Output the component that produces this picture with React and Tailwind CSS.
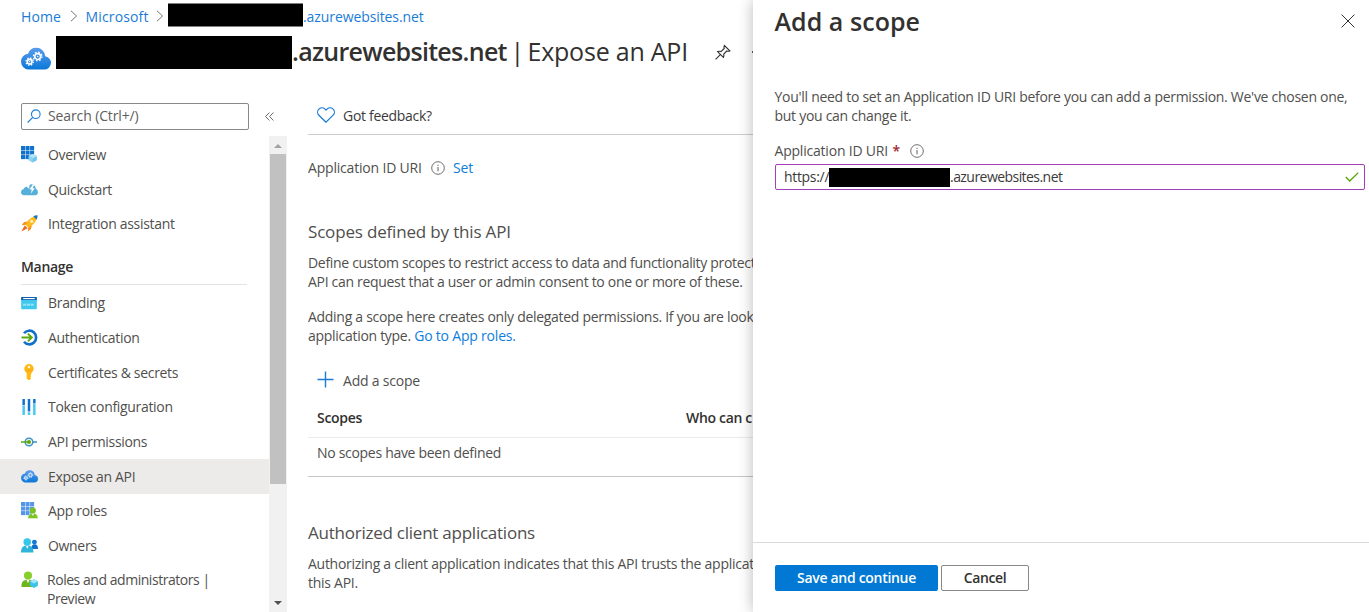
import React from 'react';

const CLOUD =
  'M18 11.32a4.12 4.12 0 0 0-3.51-4 5.15 5.15 0 0 0-5.25-5 5.25 5.25 0 0 0-5 3.49A4.86 4.86 0 0 0 0 10.59a4.94 4.94 0 0 0 5.07 4.78H13.82A4.1 4.1 0 0 0 18 11.32Z';

function Svg({ children, className = 'w-4 h-4' }) {
  return (
    <svg viewBox="0 0 18 18" fill="none" className={`shrink-0 ${className}`}>
      {children}
    </svg>
  );
}

function Gear({ cx, cy, r }) {
  const step = (2 * Math.PI * (r + 0.45)) / 16;
  return (
    <g stroke="#fff">
      <circle cx={cx} cy={cy} r={r - 0.35} strokeWidth="0.95" />
      <circle cx={cx} cy={cy} r={r + 0.45} strokeWidth="0.8" strokeDasharray={`${step} ${step}`} />
      <circle cx={cx} cy={cy} r="0.45" fill="#fff" stroke="none" />
    </g>
  );
}

function CloudGears({ className, id }) {
  return (
    <Svg className={className}>
      <defs>
        <linearGradient id={id} x1="0" y1="0" x2="0" y2="1">
          <stop offset="0" stopColor="#5a9bee" />
          <stop offset="1" stopColor="#0a78d8" />
        </linearGradient>
      </defs>
      <path d={CLOUD} fill={`url(#${id})`} />
      <Gear cx={10} cy={7.5} r={2.1} />
      <Gear cx={5.2} cy={10.6} r={1.75} />
    </Svg>
  );
}

function Grid({ color }) {
  return [0, 4.8, 9.6].map((y) =>
    [0, 4.8, 9.6].map((x) => <rect key={`${x}-${y}`} x={x} y={y} width="4.3" height="4.3" fill={color} />)
  );
}

const icons = {
  overview: (
    <Svg className="h-[17px] w-[17px] -mr-px">
      <Grid color="#0f73cc" />
      <path d="M12.5 8.4 16.8 10.6v4.6l-4.3 2.4-4.3-2.4v-4.6z" fill="#6fc4ec" />
      <path d="M12.5 8.4 16.8 10.6l-4.3 2.3-4.3-2.3z" fill="#b4e4f8" />
      <path d="M12.5 12.9v4.7l-4.3-2.4v-4.6z" fill="#8ed3f2" />
    </Svg>
  ),
  quickstart: (
    <Svg className="h-[17px] w-[17px] -mr-px">
      <path
        d="M17.9 11.6a3.6 3.6 0 0 0-2.2-3.3 4.600 4.600 0 0 0-4.600-4.800A4.600 4.600 0 0 0 7 6.200 3.800 3.800 0 0 0 2.800 8.400 3.300 3.300 0 0 0 0 11.700a3.300 3.300 0 0 0 3.200 3.300h11.500a3.300 3.300 0 0 0 3.200-3.400Z"
        fill="#56afd8"
      />
      <path d="M12.600 3.400 9 9h2.500l-1.200 4.400 4.300-5.800h-2.400l1.900-4zM7.300 3.200l-.6 3.600 2 1.400.4-4.800z" fill="#fff" />
    </Svg>
  ),
  integration: (
    <Svg className="h-[17px] w-[17px] -mr-px">
      <path d="M7.2 6.7 3.2 7.6 .6 10.8l4.6-.4zM11.4 10.8l-.8 4-3.4 2.8.6-4.8z" fill="#f78d1e" />
      <path d="M3.9 11 .4 17.5l6.7-3.4z" fill="#ef6a1b" />
      <path d="M16.8 1C12.4 1.3 8.2 3.7 4.5 10.1l3.3 3.5C14.2 10 16.9 5.5 16.8 1Z" fill="#ffb91b" />
      <path d="M17.5.3C15.9.2 14.4.6 13 1.3L16.500 5c.8-1.500 1.100-3.100 1-4.700Z" fill="#1175cc" />
      <circle cx="11.3" cy="6.7" r="1.7" fill="#fff1b8" />
    </Svg>
  ),
  branding: (
    <Svg>
      <rect x="0.2" y="2.2" width="17.6" height="13.8" rx=".5" fill="#3fc8ee" />
      <path d="M.2 2.7a.5.5 0 0 1 .5-.5h16.600a.5.5 0 0 1 .5.5v3H.2z" fill="#0f62ad" />
      <path d="M2.500 4h13" stroke="#fff" strokeWidth="1.300" />
      <path
        d="m2.500 9.800.8 2.200.8-2.200.8 2.200.8-2.200m1 0 .8 2.200.8-2.200.8 2.200.8-2.200m1 0 .8 2.200.8-2.200.8 2.200.8-2.200"
        stroke="#d5f5ff"
        strokeWidth=".6"
      />
    </Svg>
  ),
  auth: (
    <Svg className="h-[17px] w-[17px] -mr-px">
      <path d="M3.200 4.500A7.200 7.200 0 1 1 3.200 13.500" stroke="#0f6fc9" strokeWidth="2.800" />
      <path d="M.5 9h10.500M7.300 4.900 11.500 9l-4.200 4.100" stroke="#5ba80f" strokeWidth="2" />
    </Svg>
  ),
  key: (
    <Svg>
      <path
        d="M14.300 5.400A5.300 5.300 0 0 0 9 .1a5.300 5.300 0 0 0-5.300 5.300c0 2 1.100 3.700 2.700 4.600v6.200l1.900 1.700h1.300l2-1.900-1.200-1.200 1.200-1.200-1.100-1.100 1.100-1.100V10a5.300 5.300 0 0 0 2.700-4.600Z"
        fill="#fdb813"
      />
      <circle cx="9" cy="3.400" r="1.500" fill="#fff4cc" />
      <path d="M6.300 7.300h5.400" stroke="#ff9a1f" />
    </Svg>
  ),
  token: (
    <Svg>
      <path d="M3 0v7M9 0v14M15 0v5" stroke="#0f73cc" strokeWidth="2.800" />
      <path d="M3 7.500V18M9 15v3M15 5.500V18" stroke="#4cc9ee" strokeWidth="2.800" />
    </Svg>
  ),
  api: (
    <Svg>
      <circle cx="9" cy="9" r="4.300" stroke="#3d92c9" strokeWidth="1.700" />
      <path d="M13.500 9H18" stroke="#3d92c9" strokeWidth="1.700" />
      <path d="M0 9h8" stroke="#5ba80f" strokeWidth="1.700" />
      <circle cx="9" cy="9" r="2.300" fill="#5ba80f" />
    </Svg>
  ),
  expose: <CloudGears id="cloudSmall" className="h-[17px] w-[17px] -mr-px" />,
  roles: (
    <Svg className="h-[17px] w-[17px] -mr-px">
      <Grid color="#5596e8" />
      <path d="M7.300 17.600c0-3.300 1.400-5.600 5.300-5.600s5.300 2.300 5.300 5.600z" fill="#7cc325" stroke="#fff" strokeWidth=".5" />
      <path d="m11.400 12.200 1.200 2.600 1.200-2.600z" fill="#fff" />
      <circle cx="12.600" cy="9" r="3.200" fill="#79c022" />
    </Svg>
  ),
  owners: (
    <Svg className="h-[17px] w-[17px] -mr-px">
      <path d="M11 12.800c0-3 .8-5 3.400-5S18 9.800 18 12.800z" fill="#0f6fc9" />
      <circle cx="14.200" cy="5.400" r="2.600" fill="#0f78d4" />
      <path d="M0 16.400C0 11.400 1.800 9 6.600 9s6.600 2.400 6.600 7.400z" fill="#2fb4dc" />
      <path d="m5.200 9.200 1.400 3.400L8 9.200z" fill="#fff" />
      <circle cx="6.600" cy="5.300" r="4" fill="#32c8ec" />
    </Svg>
  ),
  admins: (
    <Svg className="h-[17px] w-[17px] -mr-px">
      <path d="M.4 16.900C.4 11.500 2 9.200 7.400 9.200s7 2.300 7 7.700z" fill="#6fb51f" />
      <path d="m5.900 9.400 1.500 3.600 1.500-3.600z" fill="#fff" />
      <circle cx="7.400" cy="4.700" r="4.300" fill="#86cf2c" />
      <path d="m13.700 8.700 4.200 2.200v4.600l-4.200 2.400-4.200-2.400v-4.600z" fill="#3cc3e8" />
      <path d="m13.700 8.700 4.200 2.200-4.200 2.300-4.200-2.300z" fill="#a3e6f8" />
    </Svg>
  ),
};

function NavItem({ icon, label, active }) {
  return (
    <div className={`flex h-[34.7px] items-center pl-[21px] ${active ? 'bg-[#edebe9]' : ''}`}>
      {icons[icon]}
      <span className="ml-[11px] whitespace-nowrap">{label}</span>
    </div>
  );
}

function Info() {
  return (
    <svg viewBox="0 0 14 14" fill="none" stroke="#605e5c" className="h-3.5 w-3.5 shrink-0">
      <circle cx="7" cy="7" r="6.300" strokeWidth=".9" />
      <path d="M7 6v4.300M7 3.700v1.200" strokeWidth="1" />
    </svg>
  );
}

function Chevron() {
  return (
    <svg viewBox="0 0 8 12" fill="none" stroke="#767472" className="h-3 w-2 shrink-0">
      <path d="m1 .8 5.500 5.200L1 11.200" />
    </svg>
  );
}

export default function App() {
  return (
    <div className="flex h-[612px] w-[1369px] overflow-hidden bg-white font-['Open_Sans',sans-serif] text-[14px] leading-[19px] tracking-[-0.32px] text-[#504f4d]">
      <div className="flex w-[753px] shrink-0 flex-col overflow-hidden">
        <nav className="flex h-8 shrink-0 items-center pl-[21px] tracking-[-0.09px] whitespace-nowrap text-[#1a7cd6]">
          <span className="w-[49px] tracking-[0.1px]">Home</span>
          <Chevron />
          <span className="ml-[7.5px] w-[70.5px] tracking-[0.15px]">Microsoft</span>
          <Chevron />
          <span className="ml-[4px] h-[23px] w-[135px] shrink-0 -translate-y-[1.5px] bg-black" />
          <span>.azurewebsites.net</span>
        </nav>

        <header className="flex h-10 shrink-0 items-center pl-[21px] whitespace-nowrap text-[#323130]">
          <CloudGears className="mt-[13px] h-[30px] w-[30px]" id="cloudLarge" />
          <span className="ml-[5px] h-[33px] w-[236px] shrink-0 bg-black" />
          <h1 className="flex shrink-0 -translate-y-px text-[25px] leading-8 tracking-[-0.22px]">
            <span className="w-[218.5px] font-semibold tracking-[-0.7px]">.azurewebsites.net</span>
            <span className="w-[17px]">|</span>
            <span className="w-[160.5px]">Expose an API</span>
          </h1>
          <svg viewBox="0 0 16 16" fill="none" stroke="#323130" strokeWidth="1.100" className="ml-[27px] h-4 w-4 shrink-0">
            <path d="M.6 15.400 5.300 10.700M2.600 7.600l5.800 5.800c.7-1.200.8-2.200.3-3.300l3.100-3.100c.9.400 1.800.4 3-.1L9.400 1.500c-.6 1.200-.6 2.100-.2 3L6 7.600c-1.100-.5-2.200-.6-3.400 0Z" />
          </svg>
          <span className="ml-[21px] h-[2px] w-px shrink-0 bg-[#605e5c]" />
        </header>

        <div className="flex min-h-0 flex-1">
          <aside className="flex w-[287px] shrink-0 flex-col">
            <div className="flex h-[64px] shrink-0 items-center pt-[24px] pl-[21px]">
              <div className="flex h-[27px] w-[228px] items-center rounded-[2px] border border-[#8a8886] pl-[5px]">
                <svg viewBox="0 0 14 14" fill="none" stroke="#1a7cd6" strokeWidth="1.100" className="h-3.5 w-3.5">
                  <circle cx="8.800" cy="5.200" r="4.300" />
                  <path d="M5.800 8.300.6 13.500" />
                </svg>
                <span className="ml-[7px] pb-[2px] tracking-[-0.12px] text-[#605e5c]">Search (Ctrl+/)</span>
              </div>
              <svg viewBox="0 0 9 9" fill="none" stroke="#605e5c" strokeWidth=".9" className="ml-[16px] h-[9px] w-[9px]">
                <path d="M4.400.5.6 4.500l3.800 4M8.400.5 4.600 4.500l3.800 4" />
              </svg>
            </div>
            <div className="flex min-h-0 flex-1">
              <div className="w-[269px] shrink-0 overflow-hidden pt-[1.2px]">
                <NavItem icon="overview" label="Overview" />
                <NavItem icon="quickstart" label="Quickstart" />
                <NavItem icon="integration" label="Integration assistant" />
                <div className="mr-[22px] ml-[21px] flex h-[44.2px] items-center border-b border-[#e5e3e1] pt-[8px] font-semibold text-[#323130]">
                  Manage
                </div>
                <NavItem icon="branding" label="Branding" />
                <NavItem icon="auth" label="Authentication" />
                <NavItem icon="key" label="Certificates & secrets" />
                <NavItem icon="token" label="Token configuration" />
                <NavItem icon="api" label="API permissions" />
                <NavItem icon="expose" label="Expose an API" active />
                <NavItem icon="roles" label="App roles" />
                <NavItem icon="owners" label="Owners" />
                <div className="flex pt-[7px] pl-[21px]">
                  <span className="pt-px">{icons.admins}</span>
                  <span className="ml-[10px] tracking-[-0.46px]">
                    Roles and administrators |<br />
                    Preview
                  </span>
                </div>
              </div>
              <div className="flex w-[18px] shrink-0 flex-col items-center bg-[#f1f1f1]">
                <svg viewBox="0 0 8 4" className="mt-[8px] h-1 w-2 shrink-0">
                  <path d="M0 4 4 0l4 4z" fill="#a3a3a3" />
                </svg>
                <span className="mt-[6px] h-[330px] w-4 shrink-0 bg-[#c1c1c1]" />
                <svg viewBox="0 0 8 4" className="mt-auto mb-[7px] h-1 w-2 shrink-0">
                  <path d="M0 0 4 4l4-4z" fill="#505050" />
                </svg>
              </div>
            </div>
          </aside>

          <main className="ml-[21px] flex min-w-0 flex-1 flex-col overflow-hidden whitespace-nowrap">
            <div className="flex h-[63px] shrink-0 items-center border-b border-[#cfcdcb] pt-[24px] pl-[9px] text-[#3b3a39]">
              <svg viewBox="0 0 18 16" fill="none" stroke="#1a7cd6" strokeWidth="1.200" className="h-4 w-[18px]">
                <path d="M9 15.200 1.900 8.200A4.300 4.300 0 0 1 8 2.100l1 1 1-1a4.300 4.300 0 0 1 6.100 6.100Z" />
              </svg>
              <span className="ml-[8px] tracking-[-0.3px]">Got feedback?</span>
            </div>
            <div className="mt-[23px] flex items-center tracking-[-0.19px]">
              <span className="w-[123px]">Application ID URI</span>
              <Info />
              <span className="ml-[8px] text-[#0f7ddb]">Set</span>
            </div>
            <h2 className="mt-[43px] text-[17px] leading-[24px] tracking-[-0.17px]">Scopes defined by this API</h2>
            <p className="mt-[9px] tracking-[-0.31px]">
              Define custom scopes to restrict access to data and functionality protect
              <br />
              API can request that a user or admin consent to one or more of these.
            </p>
            <p className="mt-[16px] tracking-[-0.29px]">
              Adding a scope here creates only delegated permissions. If you are look
              <br />
              application type. <span className="tracking-[-0.2px] text-[#0f7ddb]">Go to App roles.</span>
            </p>
            <div className="mt-[26px] flex items-center pl-[9px] tracking-[-0.21px]">
              <svg viewBox="0 0 17 17" stroke="#1a7cd6" className="h-[17px] w-[17px] -translate-y-px">
                <path d="M8.500.5v16M.5 8.500h16" strokeWidth="1.400" />
              </svg>
              <span className="ml-[9px]">Add a scope</span>
            </div>
            <div className="mt-[9px] flex h-[39px] shrink-0 items-center border-b border-[#edebe9] pb-px pl-[9px] font-semibold text-[#323130]">
              <span className="w-[369px] shrink-0">Scopes</span>
              <span>Who can c</span>
            </div>
            <div className="flex h-[39px] shrink-0 items-center border-b border-[#c8c6c4] pb-[9px] pl-[9px] tracking-[-0.3px]">
              No scopes have been defined
            </div>
            <h2 className="mt-[44px] text-[17px] leading-[24px] tracking-[-0.24px]">Authorized client applications</h2>
            <p className="mt-[9px] tracking-[-0.27px]">
              Authorizing a client application indicates that this API trusts the applicat
              <br />
              this API.
            </p>
          </main>
        </div>
      </div>

      <section className="z-10 flex w-[616px] shrink-0 flex-col bg-white shadow-[0_0_14px_rgba(0,0,0,0.28)]">
        <div className="flex h-[42px] items-center justify-between pr-[14px] pl-[21.5px] text-[#323130]">
          <h2 className="text-[25px] leading-8 font-semibold tracking-[0.05px]">Add a scope</h2>
          <svg viewBox="0 0 14 14" stroke="#323130" className="h-3.5 w-3.5">
            <path d="m.6.6 12.800 12.800M13.400.6.6 13.400" />
          </svg>
        </div>
        <div className="flex-1 pt-[45px] pl-[22px]">
          <p className="-ml-[0.5px] tracking-[-0.28px] whitespace-nowrap">
            You'll need to set an Application ID URI before you can add a permission. We've chosen one,
            <br />
            but you can change it.
          </p>
          <div className="mt-[16px] -ml-[0.5px] flex items-center tracking-[-0.21px]">
            <span className="w-[118px]">Application ID URI</span>
            <span className="w-[17px] font-semibold text-[#a4262c]">*</span>
            <Info />
          </div>
          <div className="mt-[4px] mr-[4px] flex h-[26px] items-center rounded-[2px] border border-[#a33fb5] pr-[5px] pl-[8px] text-[#3b3a39]">
            <span className="w-[45px] pb-[2px]">https://</span>
            <span className="h-[19px] w-[121px] bg-black" />
            <span className="pb-[2px] tracking-[-0.55px]">.azurewebsites.net</span>
            <svg viewBox="0 0 14 10" fill="none" stroke="#57a300" strokeWidth="1.300" className="ml-auto h-2.5 w-3.5">
              <path d="m.8 5 3.900 4L13.300.6" />
            </svg>
          </div>
        </div>
        <footer className="flex h-[70px] gap-[3px] border-t border-[#dcdad8] pt-[22px] pl-[22px] text-center leading-[24px] font-semibold tracking-[-0.3px]">
          <button className="h-[26px] w-[163px] rounded-[2px] bg-[#0078d4] text-white">Save and continue</button>
          <button className="h-[26px] w-[88px] rounded-[2px] border border-[#8a8886] tracking-[-0.4px] text-[#323130]">Cancel</button>
        </footer>
      </section>
    </div>
  );
}
